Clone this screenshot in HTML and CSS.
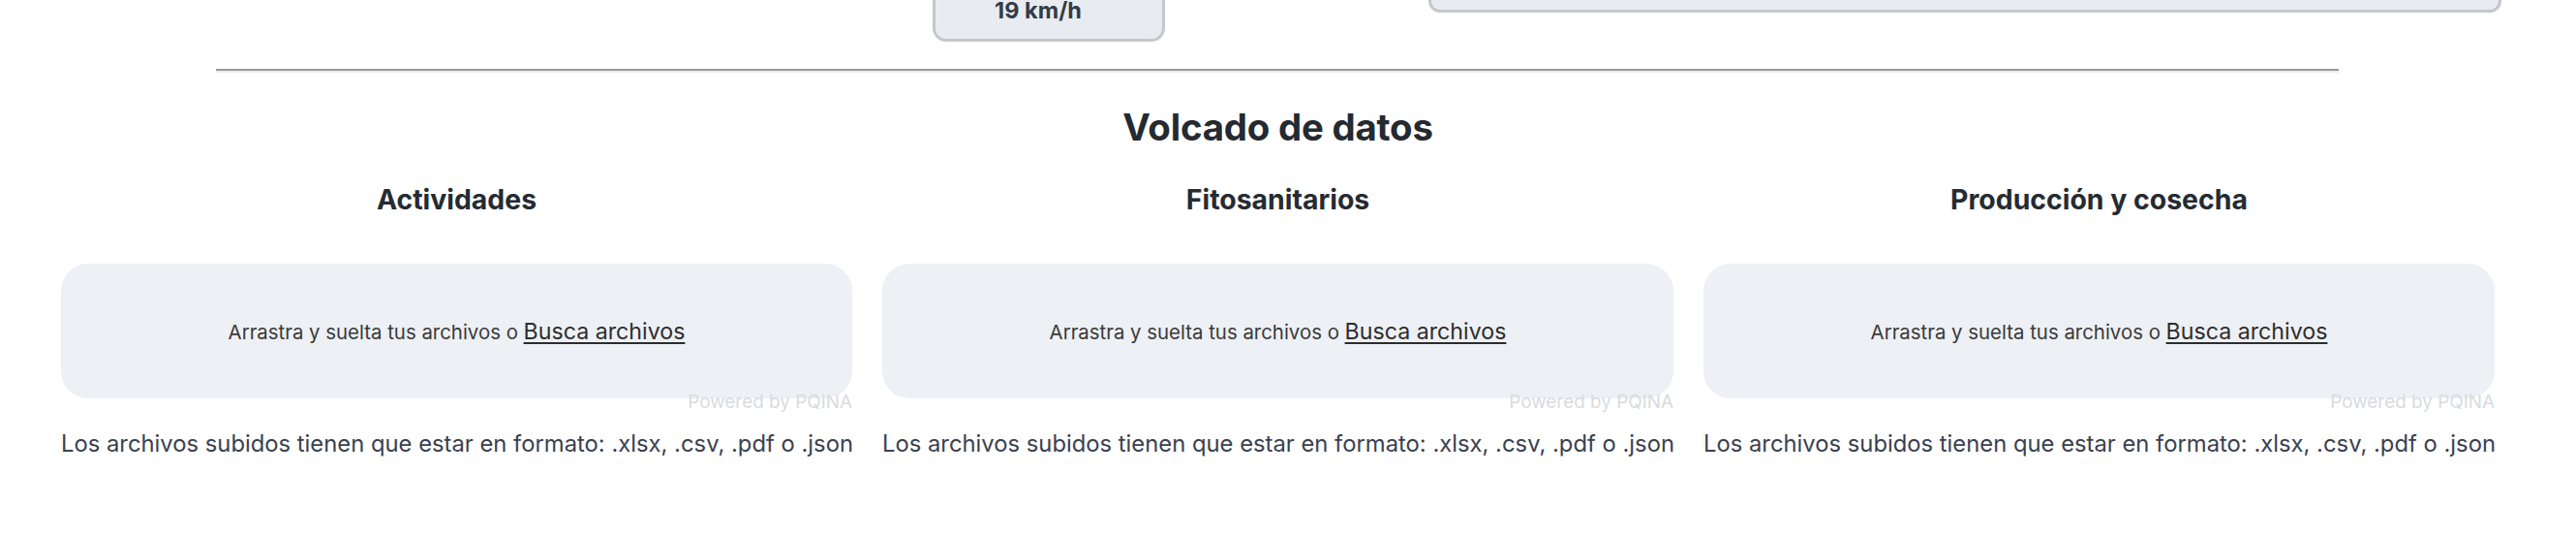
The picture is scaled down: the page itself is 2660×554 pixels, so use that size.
FILE: index.html
```html
<!DOCTYPE html>
<html lang="es">
<head>
<meta charset="utf-8">
<title>Volcado de datos</title>
<link rel="stylesheet" href="styles.css">
</head>
<body>
<div class="top-row">
  <div class="speed-box"><span class="speed-value">19 km/h</span></div>
  <div class="wide-box"></div>
</div>
<main class="page">
  <hr class="divider">
  <h2 class="title">Volcado de datos</h2>
  <div class="columns">
    <section class="column">
      <h4 class="col-title">Actividades</h4>
      <div class="drop">
        <div class="drop-panel">
          <span class="drop-label">Arrastra y suelta tus archivos o <span class="browse">Busca archivos</span></span>
        </div>
        <div class="credits">Powered by PQINA</div>
      </div>
      <p class="note">Los archivos subidos tienen que estar en formato: .xlsx, .csv, .pdf o .json</p>
    </section>
    <section class="column">
      <h4 class="col-title">Fitosanitarios</h4>
      <div class="drop">
        <div class="drop-panel">
          <span class="drop-label">Arrastra y suelta tus archivos o <span class="browse">Busca archivos</span></span>
        </div>
        <div class="credits">Powered by PQINA</div>
      </div>
      <p class="note">Los archivos subidos tienen que estar en formato: .xlsx, .csv, .pdf o .json</p>
    </section>
    <section class="column">
      <h4 class="col-title">Producción y cosecha</h4>
      <div class="drop">
        <div class="drop-panel">
          <span class="drop-label">Arrastra y suelta tus archivos o <span class="browse">Busca archivos</span></span>
        </div>
        <div class="credits">Powered by PQINA</div>
      </div>
      <p class="note">Los archivos subidos tienen que estar en formato: .xlsx, .csv, .pdf o .json</p>
    </section>
  </div>
</main>
</body>
</html>
```

FILE: styles.css
```css
* { box-sizing: border-box; }

html, body {
  margin: 0;
  padding: 0;
  background: #ffffff;
}

body {
  font-family: Inter, "Noto Sans", "Liberation Sans", sans-serif;
  color: #24292f;
  width: 2660px;
  height: 554px;
  overflow: hidden;
}

/* top cropped row */
.top-row {
  display: flex;
  align-items: flex-start;
  padding-left: 963px;
  gap: 272px;
  height: 43px;
}

.speed-box {
  width: 240px;
  height: 43px;
  background: #e8ebef;
  border: 3px solid #c4c8cc;
  border-top: none;
  border-radius: 0 0 14px 14px;
  display: flex;
  justify-content: center;
  padding-right: 22px;
}

.speed-value {
  font-weight: 700;
  font-size: 23.5px;
  line-height: 22px;
  color: #343b48;
}

.wide-box {
  width: 1108px;
  height: 13px;
  background: #e8ebef;
  border: 3px solid #c4c8cc;
  border-top: none;
  border-radius: 0 0 12px 12px;
}

/* main */
.page {
  width: 2513px;
  margin-left: 63px;
}

.divider {
  margin: 28px 161px 0 160px;
  height: 0;
  border: none;
  border-top: 2px solid #9a9a9a;
  border-bottom: 2px solid #ececec;
}

.title {
  margin: 32px 0 0;
  text-align: center;
  font-size: 38.4px;
  line-height: 48px;
  font-weight: 700;
  color: #242a31;
  letter-spacing: -0.2px;
}

.columns {
  display: grid;
  grid-template-columns: repeat(3, 817px);
  column-gap: 31px;
  margin-top: 33px;
}

.column {
  display: flex;
  flex-direction: column;
}

.col-title {
  margin: 0;
  text-align: center;
  font-size: 28.4px;
  line-height: 36px;
  font-weight: 700;
  color: #252b33;
}

.drop {
  margin-top: 48px;
  display: flex;
  flex-direction: column;
}

.drop-panel {
  height: 139px;
  background: #edf0f4;
  border-radius: 28px;
  display: flex;
  align-items: center;
  justify-content: center;
}

.drop-label {
  font-size: 20.4px;
  color: #3a3a3a;
}

.browse {
  font-size: 23.2px;
  text-decoration: underline;
  text-decoration-thickness: 1.5px;
  text-underline-offset: 3px;
  color: #2d2d2d;
}

.credits {
  align-self: flex-end;
  font-size: 18.9px;
  line-height: 20px;
  color: #d9dbde;
  margin-top: -6px;
}

.note {
  margin: 17px 0 0;
  font-size: 23.8px;
  line-height: 32px;
  color: #3a4150;
  white-space: nowrap;
}
```
